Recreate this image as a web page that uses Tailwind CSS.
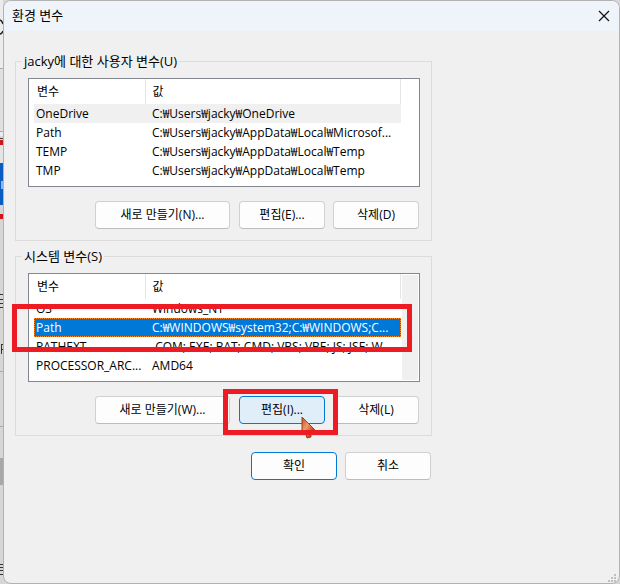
<!DOCTYPE html>
<html lang="ko">
<head>
<meta charset="utf-8">
<title>환경 변수</title>
<script src="https://cdn.jsdelivr.net/npm/@tailwindcss/browser@4"></script>
</head>
<body class="relative min-h-screen flex overflow-hidden bg-[#d6d6d6] font-['Open_Sans','Noto_Sans_CJK_KR',sans-serif] text-xs text-black">
  <!-- strip of the window behind the dialog -->
  <div class="w-[3px] shrink-0 self-stretch overflow-hidden" aria-hidden="true">
    <svg class="block" width="3" height="584" viewBox="0 0 3 584">
      <path fill="#ececec" d="M0 0h3v136H0z"/><path fill="#e0e0e0" d="M0 68h3v64H0z"/>
      <path fill="none" stroke="#222" stroke-width="1.5" d="M0 20q2 1 3 4M0 34q2 0 3-3"/>
      <path fill="#aaa" d="M0 68h3v1H0zM0 131h3v1H0z"/><path fill="#444" d="M0 138h3v1H0z"/>
      <path fill="#d0161d" d="M0 140h3v5H0zM0 214h3v5H0z"/><path fill="#e4e4e4" d="M0 145h3v18H0z"/>
      <path fill="#0a5cc0" d="M0 163h3v42H0z"/><path fill="#8fb6e4" d="M1 181h2v8H1z"/>
      <path fill="#333" d="M0 294h3v1H0zM0 299h3v1H0zM0 303h3v1H0zM0 307h3v1H0zM1 344h1v10H1zM2 344h1v1H2zM2 349h1v1H2z"/>
      <path fill="#aaa" d="M0 371h3v1H0zM0 426h3v1H0z"/><path fill="#a8a8a8" d="M0 458h3v27H0z"/>
      <path fill="#333" d="M0 564h3v1H0zM0 567h3v1H0zM0 570h3v1H0zM0 574h3v1H0z"/>
    </svg>
  </div>

  <main class="relative grow rounded-lg border border-[#b2b2b2] bg-[#f0f0f0] overflow-hidden">
    <header class="flex h-[30px] items-center justify-between bg-[#eef4f9] pl-2 pr-[7px]">
      <h1 class="text-[13px]">환경 변수</h1>
      <button type="button" aria-label="닫기" class="p-0.5">
        <svg class="block" width="12" height="12" viewBox="0 0 12 12" stroke="#111" stroke-width="1.2" fill="none"><path d="M1 1l10 10M11 1L1 11"/></svg>
      </button>
    </header>

    <div class="w-[417px] ml-[11px] mt-[22px]">
      <fieldset class="border border-[#dcdcdc] pl-3 pr-[11px] pb-[11px]">
        <legend class="-ml-[6px] -mt-px px-0.5 text-[13px] leading-4">jacky에 대한 사용자 변수(U)</legend>
        <div class="h-[109px] overflow-hidden border border-[#828790] bg-white mt-[9px] pl-[5px] pr-[18px]">
          <table class="w-full table-fixed border-collapse text-left">
            <colgroup><col class="w-[111px]"><col></colgroup>
            <thead><tr class="h-[25px]">
              <th class="border-r border-[#e5e5e5] px-[3px] py-0 font-normal">변수</th>
              <th class="border-r border-[#e5e5e5] px-[7px] py-0 font-normal">값</th>
            </tr></thead>
            <tbody class="leading-[19px]">
              <tr class="bg-[#f0f0f0]"><td class="px-0.5 py-0">OneDrive</td><td class="px-[7px] py-0">C:₩Users₩jacky₩OneDrive</td></tr>
              <tr><td class="px-0.5 py-0">Path</td><td class="whitespace-nowrap px-[7px] py-0">C:₩Users₩jacky₩AppData₩Local₩Microsof...</td></tr>
              <tr><td class="px-0.5 py-0">TEMP</td><td class="px-[7px] py-0">C:₩Users₩jacky₩AppData₩Local₩Temp</td></tr>
              <tr><td class="px-0.5 py-0">TMP</td><td class="px-[7px] py-0">C:₩Users₩jacky₩AppData₩Local₩Temp</td></tr>
            </tbody>
          </table>
        </div>
        <div class="mt-[14px] flex justify-end gap-2 pr-px">
          <button type="button" class="mr-px h-7 w-[135px] rounded border border-[#d0d0d0] border-b-[#bcbcbc] bg-[#fdfdfd]">새로 만들기(N)...</button>
          <button type="button" class="h-7 w-[86px] rounded border border-[#d0d0d0] border-b-[#bcbcbc] bg-[#fdfdfd]">편집(E)...</button>
          <button type="button" class="h-7 w-[86px] rounded border border-[#d0d0d0] border-b-[#bcbcbc] bg-[#fdfdfd]">삭제(D)</button>
        </div>
      </fieldset>

      <fieldset class="mt-[7px] border border-[#dcdcdc] pl-3 pr-[11px] pb-[11px]">
        <legend class="-ml-[6px] -mt-px px-0.5 text-[13px] leading-4">시스템 변수(S)</legend>
        <div class="relative mt-[9px]">
          <div class="flex h-[109px] items-start overflow-hidden border border-[#828790] bg-white pl-[5px] pr-px">
            <table class="grow table-fixed border-collapse text-left">
              <colgroup><col class="w-[111px]"><col></colgroup>
              <thead><tr class="h-[25px]">
                <th class="border-r border-[#e5e5e5] px-[3px] py-0 font-normal">변수</th>
                <th class="border-r border-[#e5e5e5] px-[7px] py-0 font-normal">값</th>
              </tr></thead>
              <tbody class="leading-[19px]">
                <tr><td class="px-0.5 py-0">OS</td><td class="px-[7px] py-0">Windows_NT</td></tr>
                <tr class="bg-[#0078d7] text-white outline-1 -outline-offset-1 outline-dotted outline-[#ff8728]"><td class="px-0.5 py-0">Path</td><td class="whitespace-nowrap px-[7px] py-0">C:₩WINDOWS₩system32;C:₩WINDOWS;C...</td></tr>
                <tr><td class="px-0.5 py-0">PATHEXT</td><td class="whitespace-nowrap px-[7px] py-0">.COM; EXE; BAT; CMD; VBS; VBE; JS; JSE; W...</td></tr>
                <tr><td class="px-0.5 py-0">PROCESSOR_ARC...</td><td class="px-[7px] py-0">AMD64</td></tr>
              </tbody>
            </table>
            <div class="w-4 my-px ml-px shrink-0 self-stretch bg-[#f0f0f0]"></div>
          </div>
          <div class="absolute -left-4 -right-[-8px] top-[31px] h-12 border-5 border-[#ed1c24]"></div>
        </div>
        <div class="mt-[14px] flex justify-end gap-2 pr-px">
          <button type="button" class="mr-px h-7 w-[135px] rounded border border-[#d0d0d0] border-b-[#bcbcbc] bg-[#fdfdfd]">새로 만들기(W)...</button>
          <div class="relative">
            <button type="button" class="block h-7 w-[86px] rounded border border-[#0078d4] bg-[#e0eef9]">편집(I)...</button>
            <svg class="absolute left-[62px] top-5" width="18" height="24" viewBox="0 0 18 24" aria-hidden="true">
              <defs><linearGradient id="c" x1="0" y1="0" x2="1" y2="1"><stop offset="0" stop-color="#b9501f"/><stop offset=".4" stop-color="#ee9b6d"/><stop offset=".7" stop-color="#c8511c"/><stop offset="1" stop-color="#7d3a1c"/></linearGradient></defs>
              <path d="M1 1L14 14L10 15.500L10 21L6 22L4 16L1 18z" fill="url(#c)" stroke="#a5410f"/>
            </svg>
            <div class="pointer-events-none absolute -left-4 -right-[13px] -top-[7px] h-[46px] border-5 border-[#ed1c24]"></div>
          </div>
          <button type="button" class="h-7 w-[86px] rounded border border-[#d0d0d0] border-b-[#bcbcbc] bg-[#fdfdfd]">삭제(L)</button>
        </div>
      </fieldset>

      <div class="mt-4 flex justify-end gap-2 pr-px">
        <button type="button" class="h-7 w-[86px] rounded border border-[#0078d4] bg-[#fdfdfd]">확인</button>
        <button type="button" class="h-7 w-[86px] rounded border border-[#d0d0d0] border-b-[#bcbcbc] bg-[#fdfdfd]">취소</button>
      </div>
    </div>

    <svg class="absolute bottom-px right-[3px]" width="8" height="8" fill="#bfbfbf" aria-hidden="true"><path d="M6 0h2v2H6zM3 3h2v2H3zM6 3h2v2H6zM0 6h2v2H0zM3 6h2v2H3zM6 6h2v2H6z"/></svg>
  </main>
</body>
</html>
